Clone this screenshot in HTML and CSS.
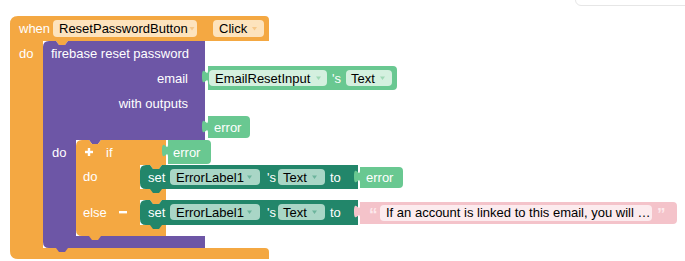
FILE: index.html
```html
<!DOCTYPE html>
<html lang="en">
<head>
<meta charset="utf-8">
<title>Blocks</title>
<link rel="stylesheet" href="styles.css">
</head>
<body>
<div class="workspace">
  <div class="toolbox-edge"></div>
  <svg class="canvas" width="685" height="261" viewBox="0 0 685 261" xmlns="http://www.w3.org/2000/svg">
    <!-- event block -->
    <path class="b-orange" d="M10,24 Q10,16 18,16 H265 Q269,16 269,20 V41 H68 L65,45 H59 L56,41 H43 V248 H265 Q269,248 269,252 V259 H18 Q10,259 10,251 Z"/>
    <rect class="pill-orange" x="53" y="20" width="144" height="17" rx="4"/>
    <text class="pt" x="59" y="33">ResetPasswordButton</text>
    <path class="arr-orange" d="M189.5,27 H194.5 L192,30.5 Z"/>
    <rect class="pill-orange" x="213" y="20" width="51" height="17" rx="4"/>
    <text class="pt" x="219" y="33">Click</text>
    <path class="arr-orange" d="M252,27 H257 L254.5,30.5 Z"/>
    <text class="lbl" x="19" y="33">when</text>
    <text class="lbl" x="19" y="58">do</text>

    <!-- firebase block -->
    <path class="b-purple" d="M49,41 H56 L59,45 H65 L68,41 H205 V140 H101 L98,144 H92 L89,140 H76 V236 H205 V248 H68 L65,252 H59 L56,248 H49 Q43,248 43,242 V47 Q43,41 49,41 Z"/>
    <text class="lbl" x="51" y="58">firebase reset password</text>
    <text class="lbl end" x="188" y="83">email</text>
    <text class="lbl end" x="188" y="108">with outputs</text>
    <text class="lbl" x="52" y="157">do</text>

    <!-- EmailResetInput getter -->
    <path class="b-green" d="M208,66 V70 c0,9 -6,-7 -6,6.5 s6,-2 6,6.5 V90 H393 Q397,90 397,86 V70 Q397,66 393,66 Z"/>
    <rect class="pill-green" x="209" y="70" width="118" height="16" rx="4"/>
    <text class="pt" x="215" y="83">EmailResetInput</text>
    <path class="arr-green" d="M316,76.5 H321 L318.5,80 Z"/>
    <text class="lbl" x="332" y="83">'s</text>
    <rect class="pill-green" x="346" y="70" width="46" height="16" rx="4"/>
    <text class="pt" x="351" y="83">Text</text>
    <path class="arr-green" d="M380,76.5 H385 L382.5,80 Z"/>

    <!-- error output -->
    <path class="b-green" d="M208,116 V120 c0,9 -6,-7 -6,6.5 s6,-2 6,6.5 V138 H246 Q250,138 250,134 V120 Q250,116 246,116 Z"/>
    <text class="lbl" x="214" y="132">error</text>

    <!-- if block -->
    <path class="b-orange" d="M82,140 H89 L92,144 H98 L101,140 H166 V165 H162 L159,169 H153 L150,165 H140 V189 H166 V200 H162 L159,204 H153 L150,200 H140 V225 H166 V236 H101 L98,240 H92 L89,236 H82 Q76,236 76,230 V146 Q76,140 82,140 Z"/>
    <rect class="icon" x="85" y="150.8" width="8" height="2.4"/>
    <rect class="icon" x="87.8" y="148" width="2.4" height="8"/>
    <text class="lbl" x="106" y="157">if</text>
    <text class="lbl" x="83" y="181">do</text>
    <text class="lbl" x="83" y="217">else</text>
    <rect class="icon" x="119" y="211" width="8" height="2.4"/>

    <!-- if condition: error -->
    <path class="b-green" d="M168,140 V144 c0,9 -6,-7 -6,6.5 s6,-2 6,6.5 V164 H207 Q211,164 211,160 V144 Q211,140 207,140 Z"/>
    <text class="lbl" x="173" y="157">error</text>

    <!-- set block 1 -->
    <path class="b-teal" d="M146,165 H150 L153,169 H159 L162,165 H358 V189 H162 L159,193 H153 L150,189 H146 Q140,189 140,183 V171 Q140,165 146,165 Z"/>
    <text class="lbl" x="148" y="182">set</text>
    <rect class="pill-teal" x="170" y="169" width="90" height="16" rx="4"/>
    <text class="pt" x="176" y="182">ErrorLabel1</text>
    <path class="arr-teal" d="M247,175.5 H252 L249.5,179 Z"/>
    <text class="lbl" x="267" y="182">'s</text>
    <rect class="pill-teal" x="278" y="169" width="47" height="16" rx="4"/>
    <text class="pt" x="283" y="182">Text</text>
    <path class="arr-teal" d="M312,175.5 H317 L314.5,179 Z"/>
    <text class="lbl" x="330" y="182">to</text>
    <path class="b-green" d="M360,167 V170 c0,9 -6,-7 -6,6.5 s6,-2 6,6.5 V188 H399 Q403,188 403,184 V171 Q403,167 399,167 Z"/>
    <text class="lbl" x="366" y="182">error</text>

    <!-- set block 2 -->
    <path class="b-teal" d="M146,200 H150 L153,204 H159 L162,200 H358 V225 H162 L159,229 H153 L150,225 H146 Q140,225 140,219 V206 Q140,200 146,200 Z"/>
    <text class="lbl" x="148" y="217">set</text>
    <rect class="pill-teal" x="170" y="204" width="90" height="16" rx="4"/>
    <text class="pt" x="176" y="217">ErrorLabel1</text>
    <path class="arr-teal" d="M247,210.5 H252 L249.5,214 Z"/>
    <text class="lbl" x="267" y="217">'s</text>
    <rect class="pill-teal" x="278" y="204" width="47" height="16" rx="4"/>
    <text class="pt" x="283" y="217">Text</text>
    <path class="arr-teal" d="M312,210.5 H317 L314.5,214 Z"/>
    <text class="lbl" x="330" y="217">to</text>
    <path class="b-pink" d="M360,202 V205 c0,9 -6,-7 -6,6.5 s6,-2 6,6.5 V224 H673 Q677,224 677,220 V206 Q677,202 673,202 Z"/>
    <text class="quote" x="369" y="220">“</text>
    <rect class="pill-pink" x="380" y="205" width="272" height="16" rx="4"/>
    <text class="pt" x="386" y="217">If an account is linked to this email, you will …</text>
    <text class="quote" x="657" y="220">”</text>
  </svg>
</div>
</body>
</html>
```
FILE: styles.css
```css
html, body {
  margin: 0;
  padding: 0;
  background: #ffffff;
}

.workspace {
  position: relative;
  width: 685px;
  height: 261px;
  overflow: hidden;
  background: #ffffff;
}

.canvas {
  display: block;
}

.toolbox-edge {
  position: absolute;
  left: 575px;
  top: -12px;
  width: 118px;
  height: 16px;
  border: 1px solid #e6e6e6;
  border-radius: 6px;
  background: #ffffff;
}

.b-orange { fill: #f4a842; }
.b-purple { fill: #6d56a6; }
.b-green { fill: #69c891; }
.b-teal { fill: #22866a; }
.b-pink { fill: #f4c3ca; }

.pill-orange { fill: #fde3bd; }
.pill-green { fill: #d4f0df; }
.pill-teal { fill: #a9d6c6; }
.pill-pink { fill: #fcebee; }

.arr-orange { fill: #f6c88a; }
.arr-green { fill: #9fd8b6; }
.arr-teal { fill: #6cb49c; }

.lbl {
  fill: #ffffff;
  font-family: "Liberation Sans", Arial, sans-serif;
  font-size: 13px;
}

.end { text-anchor: end; }

.pt {
  fill: #000000;
  font-family: "Liberation Sans", Arial, sans-serif;
  font-size: 13px;
}

.icon { fill: #ffffff; }

.quote {
  fill: #fde9ec;
  font-family: "Liberation Sans", Arial, sans-serif;
  font-size: 17px;
  font-weight: bold;
}
```
